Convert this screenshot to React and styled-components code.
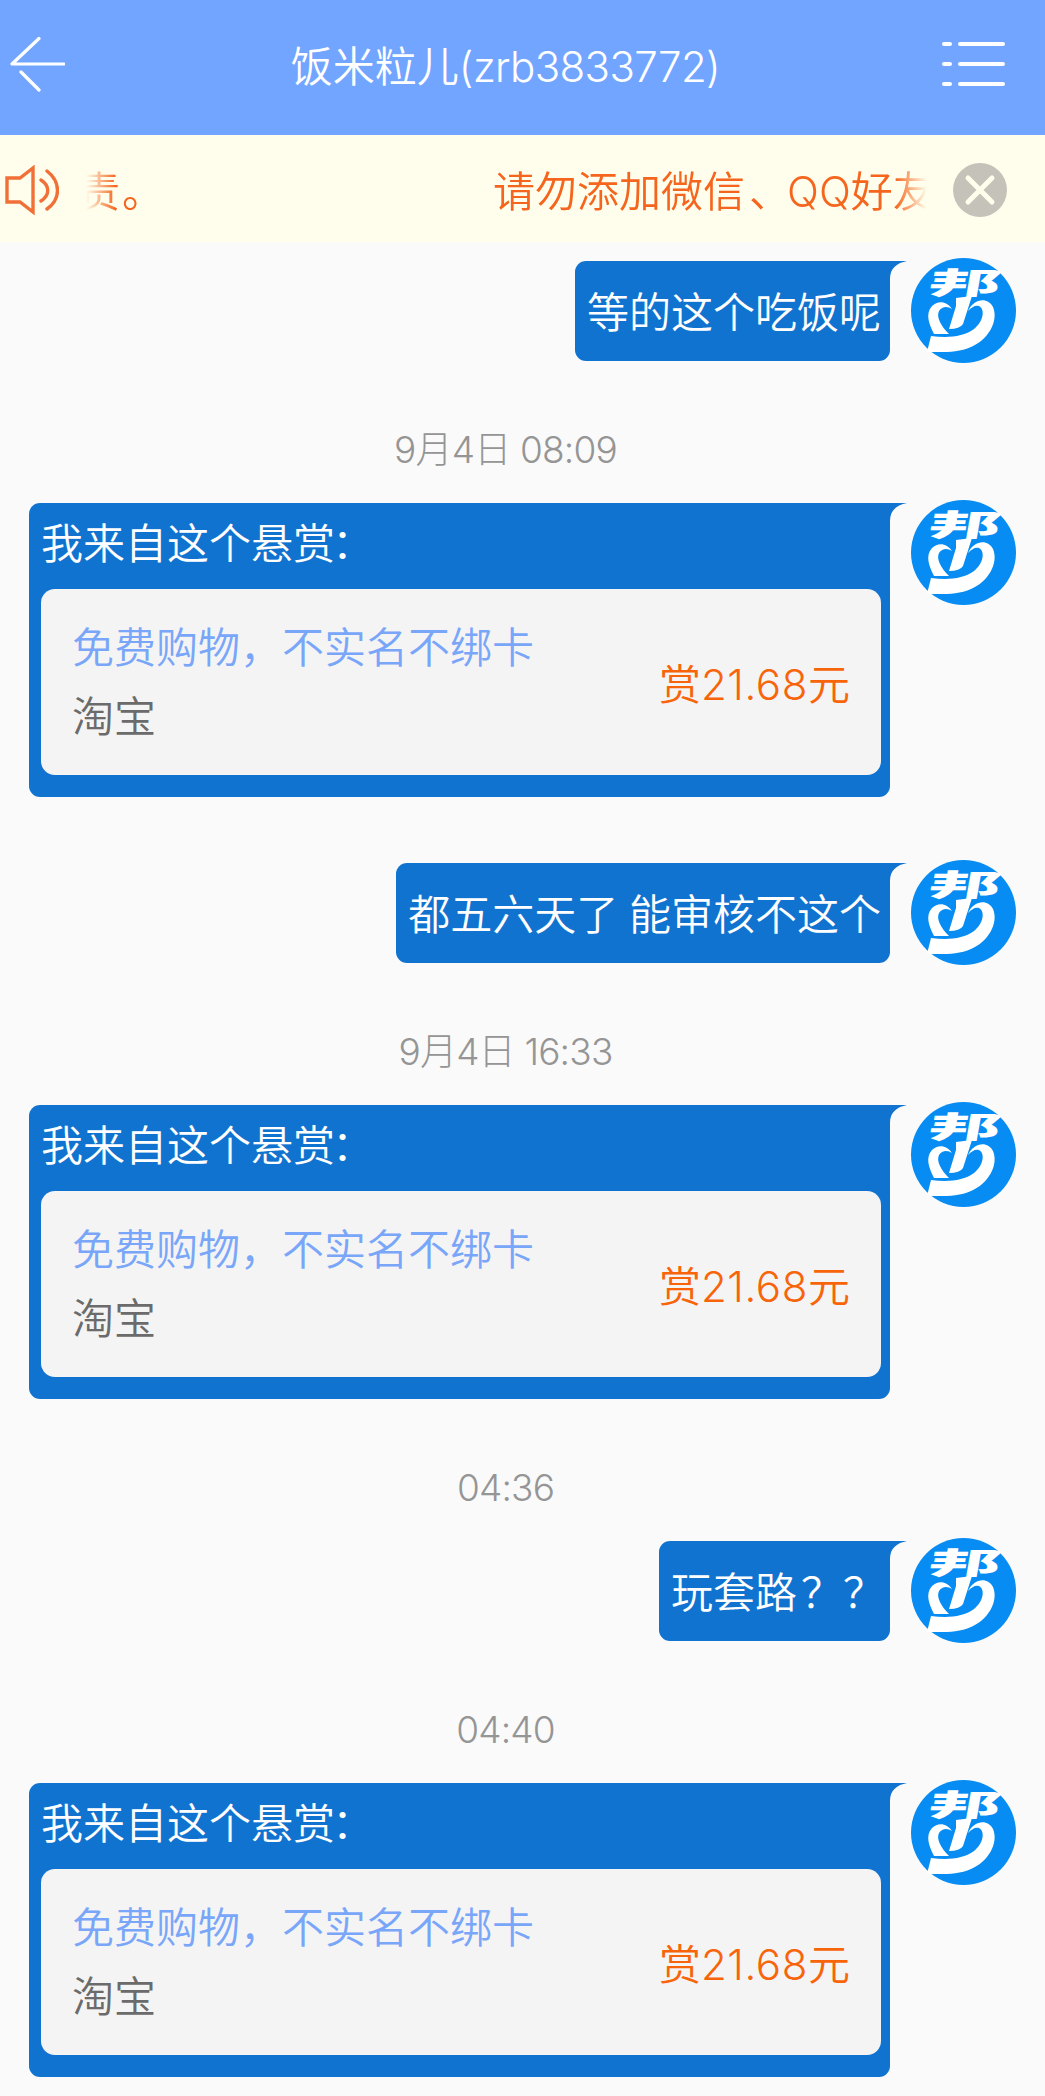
import styled, { createGlobalStyle } from 'styled-components'

const GlobalStyle = createGlobalStyle`
  body {
    margin: 0;
    background: #fafafa;
  }

  * {
    box-sizing: border-box;
  }
`

const Page = styled.div`
  width: 1045px;
  height: 2096px;
  overflow: hidden;
  background: #fafafa;
  font-family: Inter, 'Noto Sans CJK SC', sans-serif;
  font-size: 42px;
  font-weight: 350;
  line-height: 60px;
  white-space: nowrap;
`

const Header = styled.header`
  display: flex;
  align-items: center;
  justify-content: space-between;
  height: 135px;
  padding: 0 39px 8px 9px;
  background: #72a5ff;
  color: white;
`

const Title = styled.h1`
  margin: 6px 0 0;
  padding: 0 5px 0 9px;
  font-size: 42px;
  font-weight: 350;
`

const Latin = styled.span`
  letter-spacing: ${props => props.$spacing || '0'};
`

const Notice = styled.div`
  display: flex;
  align-items: center;
  height: 107px;
  padding: 2px 38px 0 3px;
  background: #fffeec;
  color: #f5651d;
`

const Marquee = styled.div`
  display: flex;
  flex: 1;
  overflow: hidden;
  margin: 5px 26px 0 27px;
  mask-image: linear-gradient(to right, transparent, black 30px, black calc(100% - 32px), transparent);
`

const MarqueeText = styled.span`
  flex: none;
  margin-left: ${props => props.$offset}px;
`

// nudges a full-width mark inside its cell
const Mark = styled.span`
  margin: 0 ${props => -props.$shift}px 0 ${props => props.$shift}px;
`

const ChatList = styled.main`
  padding-top: 16px;
`

const Time = styled.div`
  height: 137px;
  padding: 57px 34px 0 0;
  color: #959595;
  font-size: 37px;
  font-weight: 300;
  text-align: center;
  letter-spacing: -0.8px;
`

const Message = styled.div`
  display: flex;
  align-items: flex-start;
  justify-content: flex-end;
  padding-right: 29px;
  margin-top: ${props => props.$gap || 0}px;
`

const Bubble = styled.div`
  position: relative;
  height: 100px;
  margin: 3px 21px 0 0;
  padding: 22px 9px 0 12px;
  border-radius: 11px 0 11px 11px;
  background: #1173d0;
  color: white;
  word-spacing: -1px;
`

const RewardBubble = styled(Bubble)`
  width: 861px;
  height: 294px;
  margin-bottom: 2px;
  padding: 11px 9px 0 12px;
`

const Tail = styled.svg`
  position: absolute;
  top: 0;
  left: 100%;
`

const RewardCard = styled.div`
  display: flex;
  align-items: center;
  justify-content: space-between;
  height: 186px;
  margin-top: 15px;
  padding: 1px 31px 0;
  border-radius: 14px;
  background: #f4f4f4;
`

const RewardName = styled.div`
  color: #79a6f8;
  line-height: 68px;
`

const RewardSource = styled.div`
  color: #6b6b6b;
  line-height: 70px;
`

const Price = styled.div`
  margin-top: 4px;
  color: #f8640a;
`

const BackIcon = () => (
  <svg width="56" height="56" viewBox="0 0 56 56" fill="none" stroke="white" strokeWidth="3.2" strokeLinecap="round">
    <path d="M30 2.5 3 28H55M12 36l18 18" strokeLinejoin="round" />
  </svg>
)

const MenuIcon = () => (
  <svg width="64" height="48" viewBox="0 0 64 48" stroke="white" strokeWidth="4" strokeLinecap="round">
    <path d="M2 4h6M18 4h43M2 24h6M18 24h43M2 44h6M18 44h43" />
  </svg>
)

const SpeakerIcon = () => (
  <svg width="56" height="50" viewBox="0 0 56 50" fill="none" stroke="#f07038" strokeWidth="3.4" strokeLinecap="round">
    <path d="M4 13h13L30 3v44L17 37H4z" />
    <path d="M38 15c9 6 9 15 0 21M44 6c14 11 14 28 0 38" />
  </svg>
)

const CloseIcon = () => (
  <svg width="54" height="54" viewBox="0 0 54 54">
    <circle cx="27" cy="27" r="27" fill="#c4c2b9" />
    <path d="M15 15l24 24M39 15 15 39" stroke="#fffeec" strokeWidth="5" strokeLinecap="round" />
  </svg>
)

const Avatar = () => (
  <svg width="105" height="105" viewBox="0 0 105 105">
    <circle cx="52.5" cy="52.5" r="52.5" fill="#068cf2" />
    <text
      transform="translate(16 35.5) skewX(-10) scale(2.02 .84)"
      fill="white"
      fontFamily="'Noto Sans CJK SC', sans-serif"
      fontSize="36"
      fontWeight="900"
    >
      邦
    </text>
    <g fill="white">
      {/* stem between the two halves of the heart */}
      <path d="M45 40 61 38 52 66Q49 71 38 71L45 48z" />
      <path d="M41 51C36 43 27 42 21 48 14 56 18 66 23 76H38C30 68 25 59 28 53 31 48 37 48 41 51z" />
      <path d="M57 53C63 40 77 39 82 49 88 63 77 82 60 89 47 95 31 94 16 94L20 78C37 80 52 79 63 71 73 63 74 51 68 48 64 47 61 49 57 53z" />
    </g>
  </svg>
)

const BubbleTail = () => (
  <Tail width="17" height="18" viewBox="0 0 17 18">
    <path d="M0 0H17C7 2 0 7 0 18z" fill="#1173d0" />
  </Tail>
)

function TextMessage({ content, gap }) {
  return (
    <Message $gap={gap}>
      <Bubble>
        {content}
        <BubbleTail />
      </Bubble>
      <Avatar />
    </Message>
  )
}

function RewardMessage() {
  return (
    <Message>
      <RewardBubble>
        我来自这个悬赏<Mark $shift={-3}>：</Mark>
        <RewardCard>
          <div>
            <RewardName>免费购物，不实名不绑卡</RewardName>
            <RewardSource>淘宝</RewardSource>
          </div>
          <Price>赏<Latin $spacing="0.6px">21.68</Latin>元</Price>
        </RewardCard>
        <BubbleTail />
      </RewardBubble>
      <Avatar />
    </Message>
  )
}

export default function App() {
  return (
    <Page>
      <GlobalStyle />
      <Header>
        <BackIcon />
        <Title>饭米粒儿<Latin $spacing="-0.6px">(zrb3833772)</Latin></Title>
        <MenuIcon />
      </Header>
      <Notice>
        <SpeakerIcon />
        <Marquee>
          <MarqueeText $offset={-8}>责<Mark $shift={2}>。</Mark></MarqueeText>
          <MarqueeText $offset={331}>请勿添加微信<Mark $shift={4}>、</Mark>QQ好友</MarqueeText>
        </Marquee>
        <CloseIcon />
      </Notice>
      <ChatList>
        <TextMessage content="等的这个吃饭呢" />
        <Time>9月4日 08:09</Time>
        <RewardMessage />
        <TextMessage content="都五六天了 能审核不这个" gap={61} />
        <Time>9月4日 16:33</Time>
        <RewardMessage />
        <Time>04:36</Time>
        <TextMessage content={<>玩套路<Mark $shift={4}>？？</Mark></>} />
        <Time>04:40</Time>
        <RewardMessage />
      </ChatList>
    </Page>
  )
}
